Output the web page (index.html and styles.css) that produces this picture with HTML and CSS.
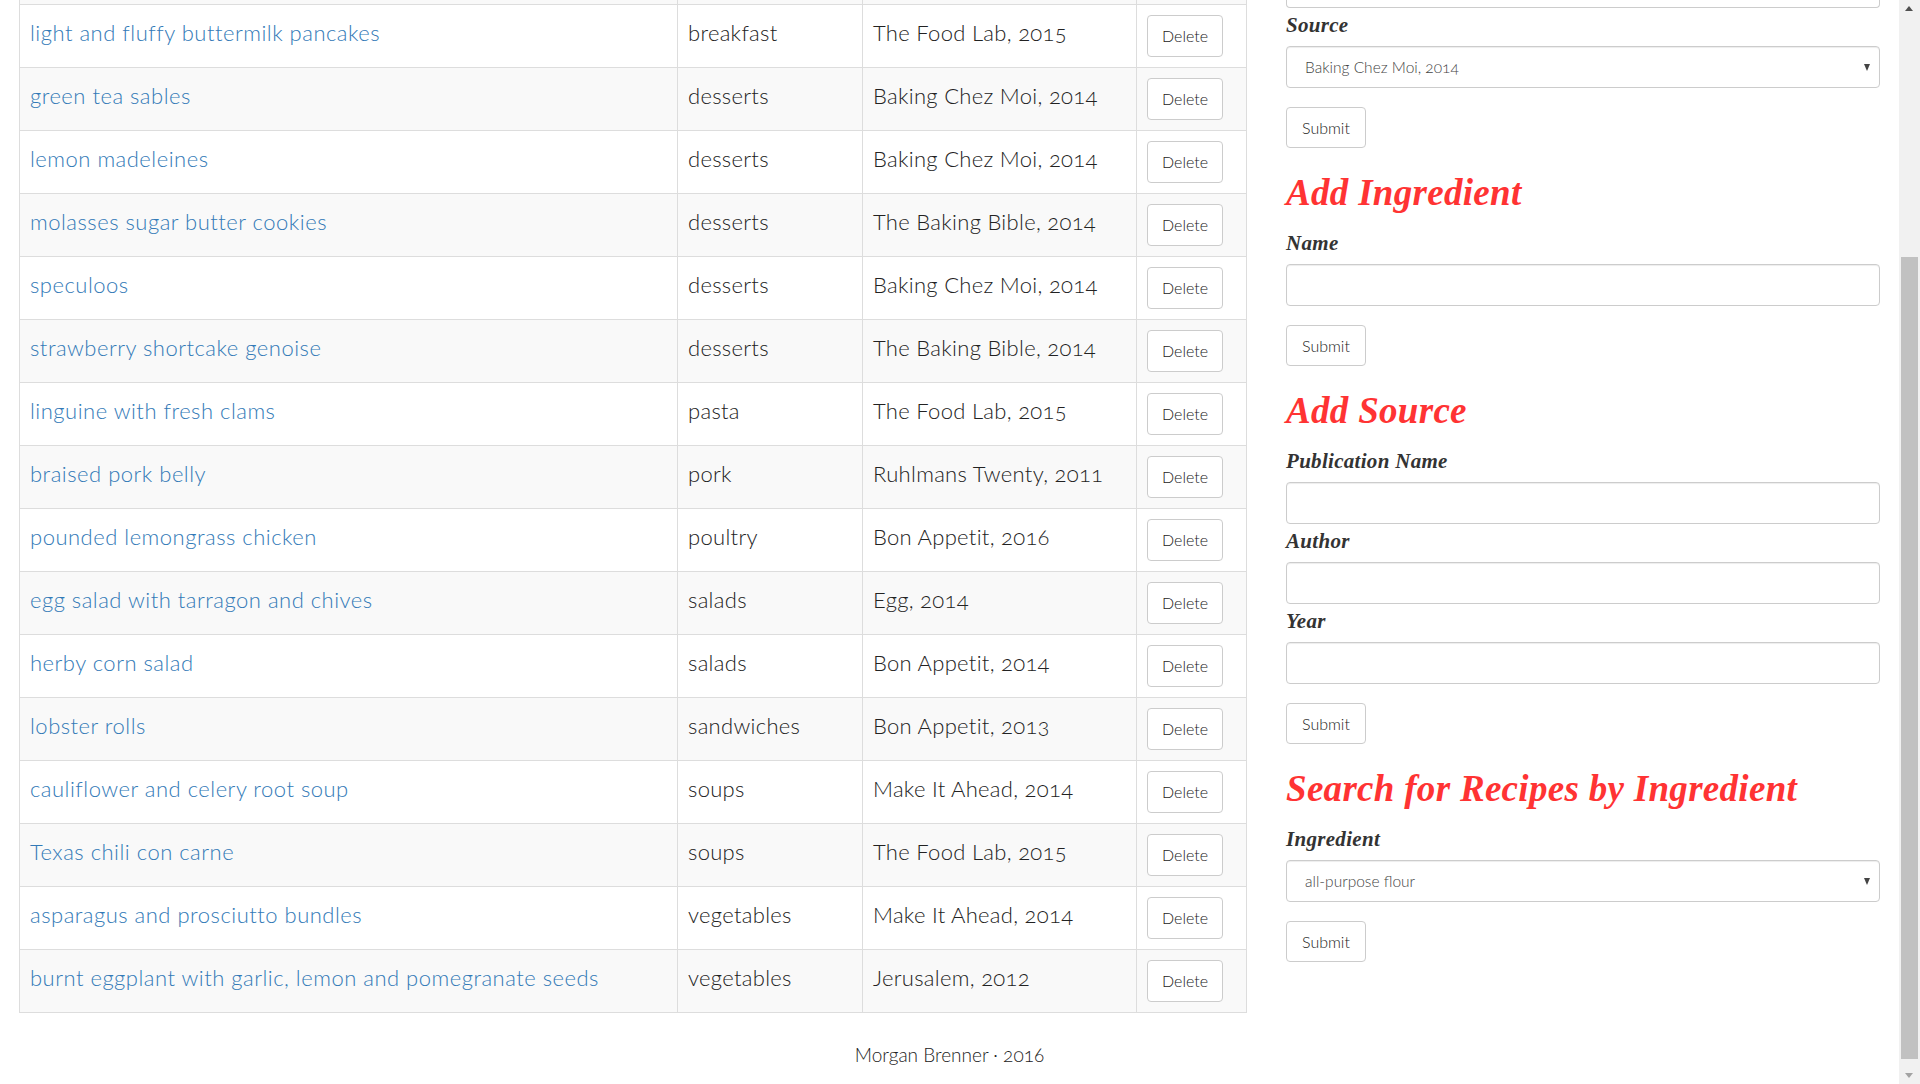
FILE: index.html
```html
<!DOCTYPE html>
<html lang="en">
<head>
<meta charset="utf-8">
<title>Recipes</title>
<link rel="stylesheet" href="styles.css">
</head>
<body>
<div class="page">
  <div class="main">
    <div class="content">
      <div class="col-left">
        <table class="recipes">
          <colgroup>
            <col class="c-name">
            <col class="c-cat">
            <col class="c-src">
            <col class="c-act">
          </colgroup>
          <tbody>
            <tr class="stub"><td></td><td></td><td></td><td></td></tr>
            <tr><td><a href="#">light and fluffy buttermilk pancakes</a></td><td>breakfast</td><td>The Food Lab, 2015</td><td class="act"><button class="btn">Delete</button></td></tr>
            <tr><td><a href="#">green tea sables</a></td><td>desserts</td><td>Baking Chez Moi, 2014</td><td class="act"><button class="btn">Delete</button></td></tr>
            <tr><td><a href="#">lemon madeleines</a></td><td>desserts</td><td>Baking Chez Moi, 2014</td><td class="act"><button class="btn">Delete</button></td></tr>
            <tr><td><a href="#">molasses sugar butter cookies</a></td><td>desserts</td><td>The Baking Bible, 2014</td><td class="act"><button class="btn">Delete</button></td></tr>
            <tr><td><a href="#">speculoos</a></td><td>desserts</td><td>Baking Chez Moi, 2014</td><td class="act"><button class="btn">Delete</button></td></tr>
            <tr><td><a href="#">strawberry shortcake genoise</a></td><td>desserts</td><td>The Baking Bible, 2014</td><td class="act"><button class="btn">Delete</button></td></tr>
            <tr><td><a href="#">linguine with fresh clams</a></td><td>pasta</td><td>The Food Lab, 2015</td><td class="act"><button class="btn">Delete</button></td></tr>
            <tr><td><a href="#">braised pork belly</a></td><td>pork</td><td>Ruhlmans Twenty, 2011</td><td class="act"><button class="btn">Delete</button></td></tr>
            <tr><td><a href="#">pounded lemongrass chicken</a></td><td>poultry</td><td>Bon Appetit, 2016</td><td class="act"><button class="btn">Delete</button></td></tr>
            <tr><td><a href="#">egg salad with tarragon and chives</a></td><td>salads</td><td>Egg, 2014</td><td class="act"><button class="btn">Delete</button></td></tr>
            <tr><td><a href="#">herby corn salad</a></td><td>salads</td><td>Bon Appetit, 2014</td><td class="act"><button class="btn">Delete</button></td></tr>
            <tr><td><a href="#">lobster rolls</a></td><td>sandwiches</td><td>Bon Appetit, 2013</td><td class="act"><button class="btn">Delete</button></td></tr>
            <tr><td><a href="#">cauliflower and celery root soup</a></td><td>soups</td><td>Make It Ahead, 2014</td><td class="act"><button class="btn">Delete</button></td></tr>
            <tr><td><a href="#">Texas chili con carne</a></td><td>soups</td><td>The Food Lab, 2015</td><td class="act"><button class="btn">Delete</button></td></tr>
            <tr><td><a href="#">asparagus and prosciutto bundles</a></td><td>vegetables</td><td>Make It Ahead, 2014</td><td class="act"><button class="btn">Delete</button></td></tr>
            <tr><td><a href="#">burnt eggplant with garlic, lemon and pomegranate seeds</a></td><td>vegetables</td><td>Jerusalem, 2012</td><td class="act"><button class="btn">Delete</button></td></tr>
          </tbody>
        </table>
      </div>

      <div class="col-right">
        <div class="stub-input"></div>
        <form class="form">
          <label class="lbl">Source</label>
          <div class="select-wrap">
            <select class="form-control select">
              <option>Baking Chez Moi, 2014</option>
            </select>
          </div>
          <button type="button" class="btn btn-submit">Submit</button>
        </form>

        <h2 class="heading">Add Ingredient</h2>
        <form class="form">
          <label class="lbl">Name</label>
          <input class="form-control" type="text">
          <button type="button" class="btn btn-submit">Submit</button>
        </form>

        <h2 class="heading">Add Source</h2>
        <form class="form">
          <label class="lbl">Publication Name</label>
          <input class="form-control" type="text">
          <label class="lbl">Author</label>
          <input class="form-control" type="text">
          <label class="lbl">Year</label>
          <input class="form-control" type="text">
          <button type="button" class="btn btn-submit">Submit</button>
        </form>

        <h2 class="heading">Search for Recipes by Ingredient</h2>
        <form class="form">
          <label class="lbl">Ingredient</label>
          <div class="select-wrap">
            <select class="form-control select">
              <option>all-purpose flour</option>
            </select>
          </div>
          <button type="button" class="btn btn-submit">Submit</button>
        </form>
      </div>
    </div>
    <footer class="footer">Morgan Brenner · 2016</footer>
  </div>

  <div class="scrollbar">
    <div class="sb-btn sb-up"></div>
    <div class="sb-track"><div class="sb-thumb"></div></div>
    <div class="sb-btn sb-down"></div>
  </div>
</div>
</body>
</html>
```

FILE: styles.css
```css
html, body {
  margin: 0;
  padding: 0;
  height: 1084px;
  overflow: hidden;
  background: #fff;
}

body {
  font-family: Lato, "Noto Sans", sans-serif;
  font-weight: 300;
  font-variant-numeric: oldstyle-nums;
  color: #222;
}

.page {
  display: flex;
  height: 1084px;
}

.main {
  flex: 1;
  display: flex;
  flex-direction: column;
}

.content {
  display: flex;
  align-items: flex-start;
  padding-left: 19px;
}

/* ---------- table ---------- */
.recipes {
  border-collapse: collapse;
  table-layout: fixed;
  width: 1227px;
  font-size: 22px;
  letter-spacing: 0.3px;
}

.c-name { width: 658px; }
.c-cat { width: 185px; }
.c-src { width: 274px; }
.c-act { width: 110px; }

.recipes td {
  border: 1px solid #ddd;
  padding: 12px 10px 0 10px;
  line-height: 31px;
  vertical-align: top;
  white-space: nowrap;
}

.recipes tr:nth-child(odd) td {
  background: #f9f9f9;
}

.recipes tr.stub td {
  height: 4px;
  padding: 0;
  line-height: 0;
  border-top: none;
}

.recipes td.act {
  padding: 10px 10px;
  line-height: 0;
  letter-spacing: 0;
}

.recipes a {
  color: #337ab7;
  text-decoration: none;
  letter-spacing: 0.5px;
}

/* ---------- buttons ---------- */
.btn {
  font-family: Lato, "Noto Sans", sans-serif;
  font-weight: 300;
  font-size: 16px;
  color: #222;
  background: #fff;
  border: 1px solid #ccc;
  border-radius: 4px;
  padding: 0 14px;
  height: 42px;
  line-height: 40px;
  cursor: pointer;
}

.btn-submit {
  display: block;
  height: 41px;
  margin-top: 19px;
  padding: 0 15px;
}

/* ---------- right column ---------- */
.col-right {
  width: 594px;
  margin-left: 39px;
}

.stub-input {
  height: 8px;
  border: 1px solid #ccc;
  border-top: none;
  border-radius: 0 0 4px 4px;
  box-sizing: border-box;
}

.form {
  margin: 0;
}

.lbl {
  display: block;
  font-family: "Liberation Serif", "Times New Roman", serif;
  font-weight: bold;
  font-style: italic;
  font-size: 21px;
  letter-spacing: 0.3px;
  line-height: 34px;
  margin-bottom: 4px;
  color: #333;
}

.heading {
  font-family: "Liberation Serif", "Times New Roman", serif;
  font-weight: bold;
  font-style: italic;
  font-size: 37px;
  letter-spacing: 0.3px;
  line-height: 40px;
  color: #ff3333;
  margin: 25px 0 13px 0;
}

.form-control {
  display: block;
  width: 100%;
  height: 42px;
  box-sizing: border-box;
  border: 1px solid #ccc;
  border-radius: 4px;
  background: #fff;
  box-shadow: inset 0 1px 1px rgba(0, 0, 0, 0.075);
  font-family: Lato, "Noto Sans", sans-serif;
  font-weight: 300;
  font-variant-numeric: oldstyle-nums;
  font-size: 15.5px;
  color: #444;
  padding: 0 18px;
  margin: 0;
}

.select-wrap {
  position: relative;
}

.select {
  appearance: none;
  -webkit-appearance: none;
}

.select-wrap::after {
  content: "";
  position: absolute;
  right: 10px;
  top: 18px;
  width: 0;
  height: 0;
  border-left: 3.5px solid transparent;
  border-right: 3.5px solid transparent;
  border-top: 7px solid #444;
  pointer-events: none;
}

/* ---------- footer ---------- */
.footer {
  margin-top: 28px;
  text-align: center;
  font-size: 19px;
  line-height: 27px;
  color: #222;
}

/* ---------- scrollbar ---------- */
.scrollbar {
  width: 21px;
  display: flex;
  flex-direction: column;
  background: #f1f1f1;
}

.sb-btn {
  height: 17px;
  position: relative;
}

.sb-btn::after {
  content: "";
  position: absolute;
  left: 6px;
  width: 0;
  height: 0;
  border-left: 4.5px solid transparent;
  border-right: 4.5px solid transparent;
}

.sb-up::after {
  top: 6px;
  border-bottom: 5px solid #505050;
}

.sb-down::after {
  top: 6px;
  border-top: 5px solid #a3a3a3;
}

.sb-track {
  flex: 1;
  display: flex;
  flex-direction: column;
  justify-content: flex-end;
  padding: 0 2px 8px 2px;
}

.sb-thumb {
  height: 802px;
  background: #c1c1c1;
}
```
